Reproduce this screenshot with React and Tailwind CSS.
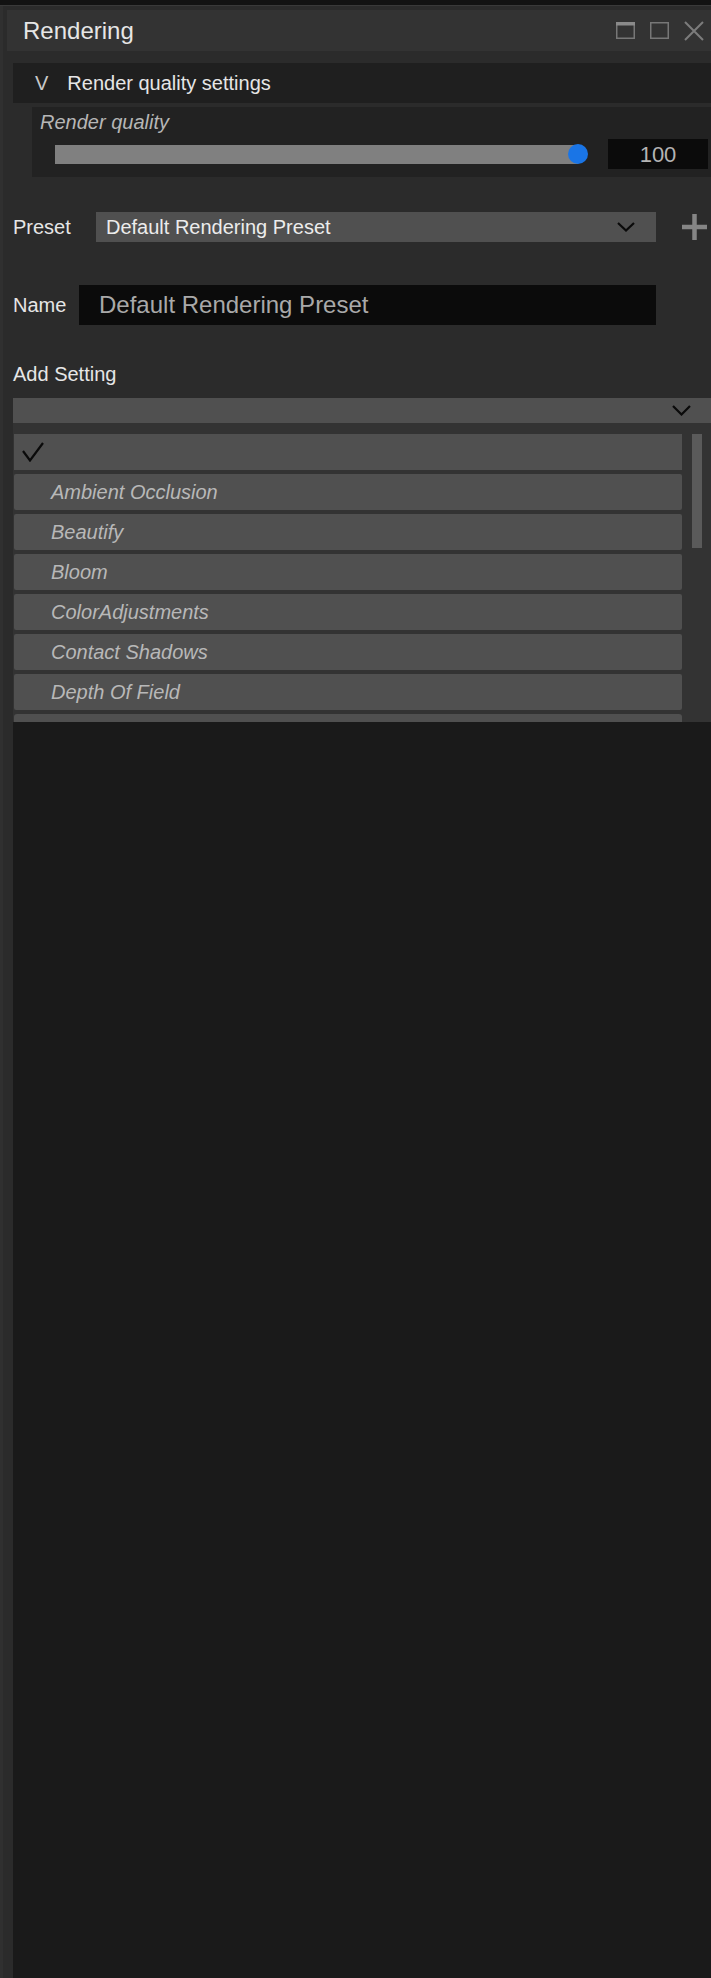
const items = [
  'Ambient Occlusion',
  'Beautify',
  'Bloom',
  'ColorAdjustments',
  'Contact Shadows',
  'Depth Of Field',
];

const Chevron = ({ w = 18, h = 10 }) => (
  <svg width={w} height={h} viewBox={`0 0 ${w} ${h}`} fill="none">
    <path d={`M1 1 L${w / 2} ${h - 1.5} L${w - 1} 1`} stroke="#0a0a0a" strokeWidth="2.2" />
  </svg>
);

const TitleIcons = () => (
  <div className="flex items-center gap-[15px] pr-[7px]">
    <svg width="19" height="17" viewBox="0 0 19 17" fill="none">
      <rect x="0.75" y="0.75" width="17.5" height="15.5" stroke="#777" strokeWidth="1.5" />
      <rect x="0" y="0" width="19" height="3.5" fill="#8a8a8a" />
    </svg>
    <svg width="19" height="17" viewBox="0 0 19 17" fill="none">
      <rect x="0.75" y="0.75" width="17.5" height="15.5" stroke="#777" strokeWidth="1.5" />
    </svg>
    <svg width="20" height="20" viewBox="0 0 20 20" fill="none">
      <path d="M1 1 L19 19 M19 1 L1 19" stroke="#7c7c7c" strokeWidth="2" />
    </svg>
  </div>
);

export default function App() {
  return (
    <div className="w-[711px] h-[1978px] flex flex-col bg-[#2b2b2b] overflow-hidden font-['Liberation_Sans',Arial,sans-serif]">
      <div className="h-[5px] shrink-0 bg-[#121212]" />
      <div className="h-px shrink-0 bg-[#393939]" />

      <div className="flex-1 flex flex-col border-l-[3px] border-[#303030]">
        {/* panel */}
        <div className="pt-[4px] pl-[4px]">
          <div className="h-[41px] bg-[#333333] flex items-center justify-between pl-[16px]">
            <span className="text-[24px] leading-none text-[#e6e6e6]">Rendering</span>
            <TitleIcons />
          </div>

          <div className="pl-[6px] pt-[12px]">
            {/* section header */}
            <div className="h-[40px] bg-[#1f1f1f] flex items-center pl-[22px] gap-[19px]">
              <span className="text-[20px] leading-none text-[#c8c8c8]">V</span>
              <span className="text-[20px] leading-none text-[#e6e6e6]">Render quality settings</span>
            </div>

            {/* render quality box */}
            <div className="mt-[4px] ml-[19px] h-[70px] bg-[#222222] pl-[8px] pt-[4px]">
              <div className="text-[20px] leading-[23px] italic text-[#b6b6b6]">Render quality</div>
              <div className="mt-[5px] h-[30px] flex items-center">
                <div className="relative ml-[15px] w-[523px] h-[19px] bg-[#808080]">
                  <div className="absolute right-[-10px] top-[-0.5px] w-[20px] h-[20px] rounded-full bg-[#1a75e6]" />
                </div>
                <div className="ml-auto mr-[3px] w-[100px] h-[30px] bg-[#0b0b0b] flex items-center justify-center text-[22px] text-[#b4b4b4]">
                  100
                </div>
              </div>
            </div>

            {/* preset */}
            <div className="mt-[35px] h-[30px] flex items-center">
              <span className="w-[83px] text-[20px] leading-none text-[#e6e6e6]">Preset</span>
              <div className="w-[560px] h-[30px] bg-[#505050] flex items-center justify-between pl-[10px] pr-[21px]">
                <span className="text-[20px] leading-none text-[#ececec]">Default Rendering Preset</span>
                <Chevron w={18} h={10} />
              </div>
              <svg className="ml-[26px]" width="25" height="26" viewBox="0 0 25 26" fill="none">
                <path d="M12.5 0 V26 M0 13 H25" stroke="#858585" strokeWidth="4.5" />
              </svg>
            </div>

            {/* name */}
            <div className="mt-[43px] h-[40px] flex items-center">
              <span className="w-[66px] text-[20px] leading-none text-[#e6e6e6]">Name</span>
              <div className="w-[577px] h-[40px] bg-[#0b0b0b] flex items-center pl-[20px] text-[24px] text-[#a9a9a9]">
                Default Rendering Preset
              </div>
            </div>

            {/* add setting */}
            <div className="mt-[37px] text-[20px] leading-[24px] text-[#e6e6e6]">Add Setting</div>
            <div className="mt-[12px] h-[25px] bg-[#505050] flex items-center justify-end pr-[20px]">
              <Chevron w={19} h={11} />
            </div>

            {/* list */}
            <div className="h-[299px] bg-[#333333] flex overflow-hidden pt-[11px] pl-px">
              <div className="w-[668px] flex flex-col gap-[4px]">
                <div className="h-[36px] shrink-0 bg-[#505050] flex items-center pl-[8px]">
                  <svg width="22" height="20" viewBox="0 0 22 20" fill="none">
                    <path d="M1 9 L8 18.5 L21 1" stroke="#0a0a0a" strokeWidth="2.2" />
                  </svg>
                </div>
                {items.map((item) => (
                  <div
                    key={item}
                    className="h-[36px] shrink-0 bg-[#505050] rounded-[2px] flex items-center pl-[37px] text-[20px] italic text-[#b8b8b8]"
                  >
                    {item}
                  </div>
                ))}
                <div className="h-[36px] shrink-0 bg-[#505050] rounded-[3px]" />
              </div>
              <div className="flex-1 pl-[10px]">
                <div className="w-[10px] h-[114px] bg-[#5a5a5a]" />
              </div>
            </div>
          </div>
        </div>

        {/* empty area below */}
        <div className="flex-1 flex">
          <div className="w-[10px] bg-[#2b2b2b]" />
          <div className="flex-1 bg-[#1a1a1a]" />
        </div>
      </div>
    </div>
  );
}
